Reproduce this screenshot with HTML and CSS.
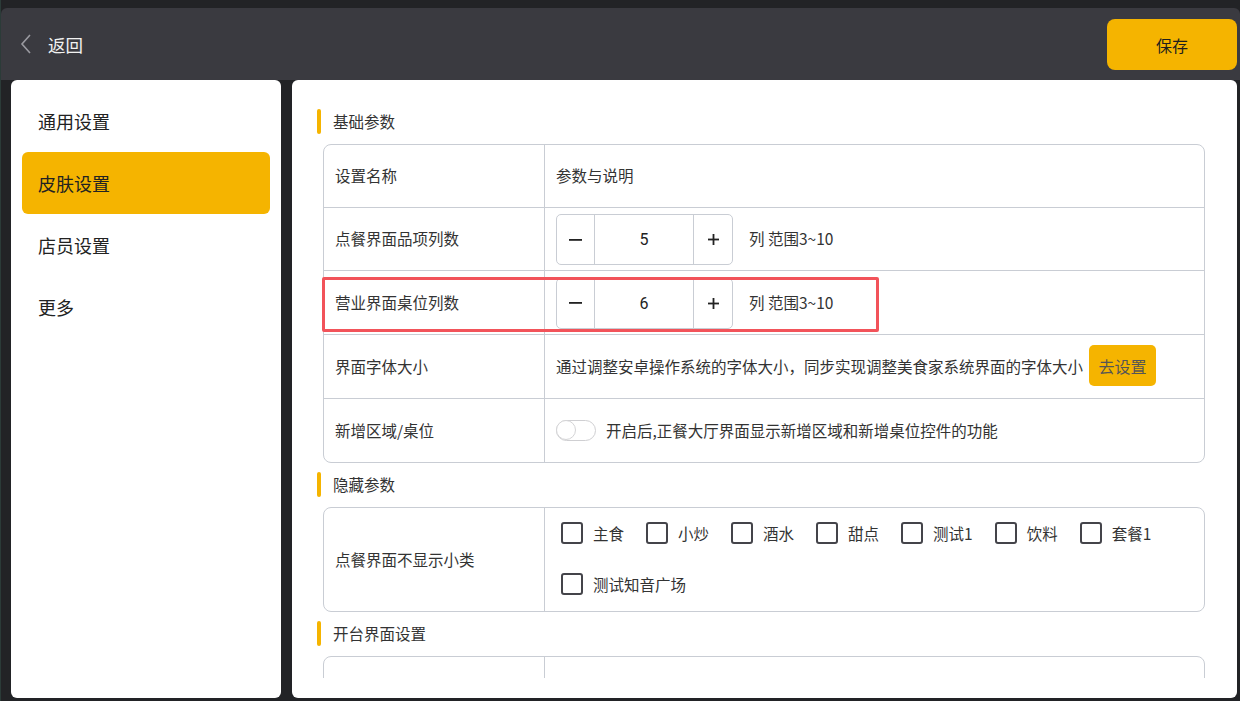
FILE: index.html
```html
<!DOCTYPE html>
<html lang="zh">
<head>
<meta charset="utf-8">
<link rel="stylesheet" href="styles.css">
</head>
<body>
<div class="app">
  <header class="header">
    <div class="back">
      <svg class="chev" width="12" height="20" viewBox="0 0 12 20"><path d="M10 1 L2 10 L10 19" fill="none" stroke="#9a9aa0" stroke-width="1.6"/></svg>
      <span>返回</span>
    </div>
    <button class="save">保存</button>
  </header>
  <main class="main">
    <nav class="side">
      <div class="item">通用设置</div>
      <div class="item active">皮肤设置</div>
      <div class="item">店员设置</div>
      <div class="item">更多</div>
    </nav>
    <section class="content">
      <div class="scroll">
        <div class="stitle"><i></i>基础参数</div>
        <div class="table">
          <div class="row">
            <div class="c1">设置名称</div>
            <div class="c2">参数与说明</div>
          </div>
          <div class="row">
            <div class="c1">点餐界面品项列数</div>
            <div class="c2">
              <div class="stepper">
                <span class="minus"><svg width="13" height="2" viewBox="0 0 13 2"><rect width="13" height="1.8" fill="#222"/></svg></span>
                <span class="val">5</span>
                <span class="plus"><svg width="11" height="11" viewBox="0 0 11 11"><rect x="0" y="4.6" width="11" height="1.8" fill="#222"/><rect x="4.6" y="0" width="1.8" height="11" fill="#222"/></svg></span>
              </div>
              <span class="hint">列 范围3~10</span>
            </div>
          </div>
          <div class="row hl">
            <div class="c1">营业界面桌位列数</div>
            <div class="c2">
              <div class="stepper">
                <span class="minus"><svg width="13" height="2" viewBox="0 0 13 2"><rect width="13" height="1.8" fill="#222"/></svg></span>
                <span class="val">6</span>
                <span class="plus"><svg width="11" height="11" viewBox="0 0 11 11"><rect x="0" y="4.6" width="11" height="1.8" fill="#222"/><rect x="4.6" y="0" width="1.8" height="11" fill="#222"/></svg></span>
              </div>
              <span class="hint">列 范围3~10</span>
            </div>
            <div class="redbox"></div>
          </div>
          <div class="row">
            <div class="c1">界面字体大小</div>
            <div class="c2">
              <span>通过调整安卓操作系统的字体大小，同步实现调整美食家系统界面的字体大小</span>
              <button class="goset">去设置</button>
            </div>
          </div>
          <div class="row">
            <div class="c1">新增区域/桌位</div>
            <div class="c2">
              <span class="toggle"><span class="knob"></span></span>
              <span class="tlabel">开启后,正餐大厅界面显示新增区域和新增桌位控件的功能</span>
            </div>
          </div>
        </div>

        <div class="stitle"><i></i>隐藏参数</div>
        <div class="table">
          <div class="row tall">
            <div class="c1">点餐界面不显示小类</div>
            <div class="c2 checks">
              <label class="ck"><span class="box"></span>主食</label>
              <label class="ck"><span class="box"></span>小炒</label>
              <label class="ck"><span class="box"></span>酒水</label>
              <label class="ck"><span class="box"></span>甜点</label>
              <label class="ck"><span class="box"></span>测试1</label>
              <label class="ck"><span class="box"></span>饮料</label>
              <label class="ck"><span class="box"></span>套餐1</label>
              <label class="ck"><span class="box"></span>测试知音广场</label>
            </div>
          </div>
        </div>

        <div class="stitle"><i></i>开台界面设置</div>
        <div class="table">
          <div class="row">
            <div class="c1"></div>
            <div class="c2"></div>
          </div>
        </div>
      </div>
    </section>
  </main>
</div>
</body>
</html>
```

FILE: styles.css
```css
* { box-sizing: border-box; }
html, body { margin: 0; padding: 0; }
body {
  width: 1240px;
  height: 701px;
  overflow: hidden;
  background: #222326;
  font-family: "Noto Sans CJK SC", "Noto Sans", sans-serif;
  color: #333;
}
.app {
  height: 701px;
  border-left: 1px solid #2b3b38;
  padding-top: 8px;
  display: flex;
  flex-direction: column;
}
.header {
  height: 72px;
  background: #3a3a40;
  border-radius: 6px 6px 0 0;
  display: flex;
  align-items: center;
  justify-content: space-between;
  padding: 0 3px 0 19px;
}
.back {
  display: flex;
  align-items: center;
  gap: 16px;
  color: #f2f2f2;
  font-size: 17.5px;
}
.chev { display: block; }
.save {
  width: 130px;
  height: 51px;
  margin-top: 1px;
  border: none;
  border-radius: 8px;
  background: #f5b400;
  color: #1e1e1e;
  font-family: inherit;
  font-size: 16px;
  padding: 0;
}
.main {
  flex: 1;
  display: flex;
  gap: 11px;
  padding: 0 3px 3px 10px;
  min-height: 0;
}
.side {
  width: 270px;
  background: #fff;
  border-radius: 6px;
  padding: 10px 11px;
}
.item {
  height: 62px;
  display: flex;
  align-items: center;
  padding-left: 16px;
  padding-bottom: 1px;
  font-size: 18px;
  color: #222;
  border-radius: 6px;
}
.item.active { background: #f5b400; }
.content {
  flex: 1;
  background: #fff;
  border-radius: 6px;
  padding-bottom: 20px;
}
.scroll {
  height: 100%;
  overflow: hidden;
  padding: 29px 32px 0 25px;
}
.stitle {
  height: 25px;
  display: flex;
  align-items: center;
  gap: 12px;
  font-size: 15.5px;
  color: #333;
  margin-bottom: 10px;
  padding-bottom: 1px;
}
.stitle i {
  width: 4px;
  height: 25px;
  background: #f5b400;
  border-radius: 2px;
}
.table {
  margin-left: 6px;
  border: 1px solid #c9cdd4;
  border-radius: 8px;
  margin-bottom: 9px;
}
.row {
  display: flex;
  height: 64px;
  position: relative;
}
.row + .row { border-top: 1px solid #c9cdd4; }
.row:nth-child(1) { height: 62px; }
.row:nth-child(2) { height: 63px; }
.c1 {
  width: 221px;
  border-right: 1px solid #c9cdd4;
  display: flex;
  align-items: center;
  padding-left: 11px;
  padding-bottom: 2px;
  font-size: 15.5px;
  color: #333;
}
.c2 {
  flex: 1;
  display: flex;
  align-items: center;
  padding-left: 11px;
  padding-bottom: 2px;
  font-size: 15.5px;
  color: #333;
}
.stepper {
  display: flex;
  height: 51px;
  width: 177px;
  margin-top: 3px;
  border: 1px solid #c9cdd4;
  border-radius: 5px;
  font-size: 16px;
  color: #222;
}
.stepper span {
  display: flex;
  align-items: center;
  justify-content: center;
}
.stepper svg { display: block; }
.minus { width: 38px; border-right: 1px solid #c9cdd4; }
.val { width: 99px; border-right: 1px solid #c9cdd4; font-family: Roboto, sans-serif; }
.plus { flex: 1; }
.hint { margin-left: 16px; }
.redbox {
  position: absolute;
  left: -2px;
  top: 6px;
  width: 557px;
  height: 55px;
  border: 3px solid #f2535a;
  border-radius: 2px;
}
.goset {
  margin-left: 6px;
  width: 67px;
  height: 41px;
  border: none;
  border-radius: 5px;
  background: #f5b400;
  color: #555;
  font-family: inherit;
  font-size: 16px;
  padding: 0;
}
.toggle {
  width: 40px;
  height: 21px;
  margin-top: 2px;
  border: 1.5px solid #cfcfd2;
  border-radius: 11px;
  position: relative;
  background: #fff;
}
.knob {
  position: absolute;
  left: -1px;
  top: -1px;
  width: 20px;
  height: 20px;
  border-radius: 50%;
  border: 1.5px solid #d4d4d6;
  background: #fff;
}
.tlabel { margin-left: 10px; }
.row.tall { height: 103px; }
.c2.checks {
  flex-wrap: wrap;
  align-content: flex-start;
  align-items: center;
  padding-left: 16px;
  padding-bottom: 0;
  column-gap: 22px;
}
.ck {
  height: 51.5px;
  display: flex;
  align-items: center;
  gap: 10px;
  font-size: 15.5px;
  color: #333;
  padding-bottom: 2px;
}
.box {
  width: 22px;
  height: 22px;
  border: 2px solid #44444a;
  border-radius: 3px;
}
```
